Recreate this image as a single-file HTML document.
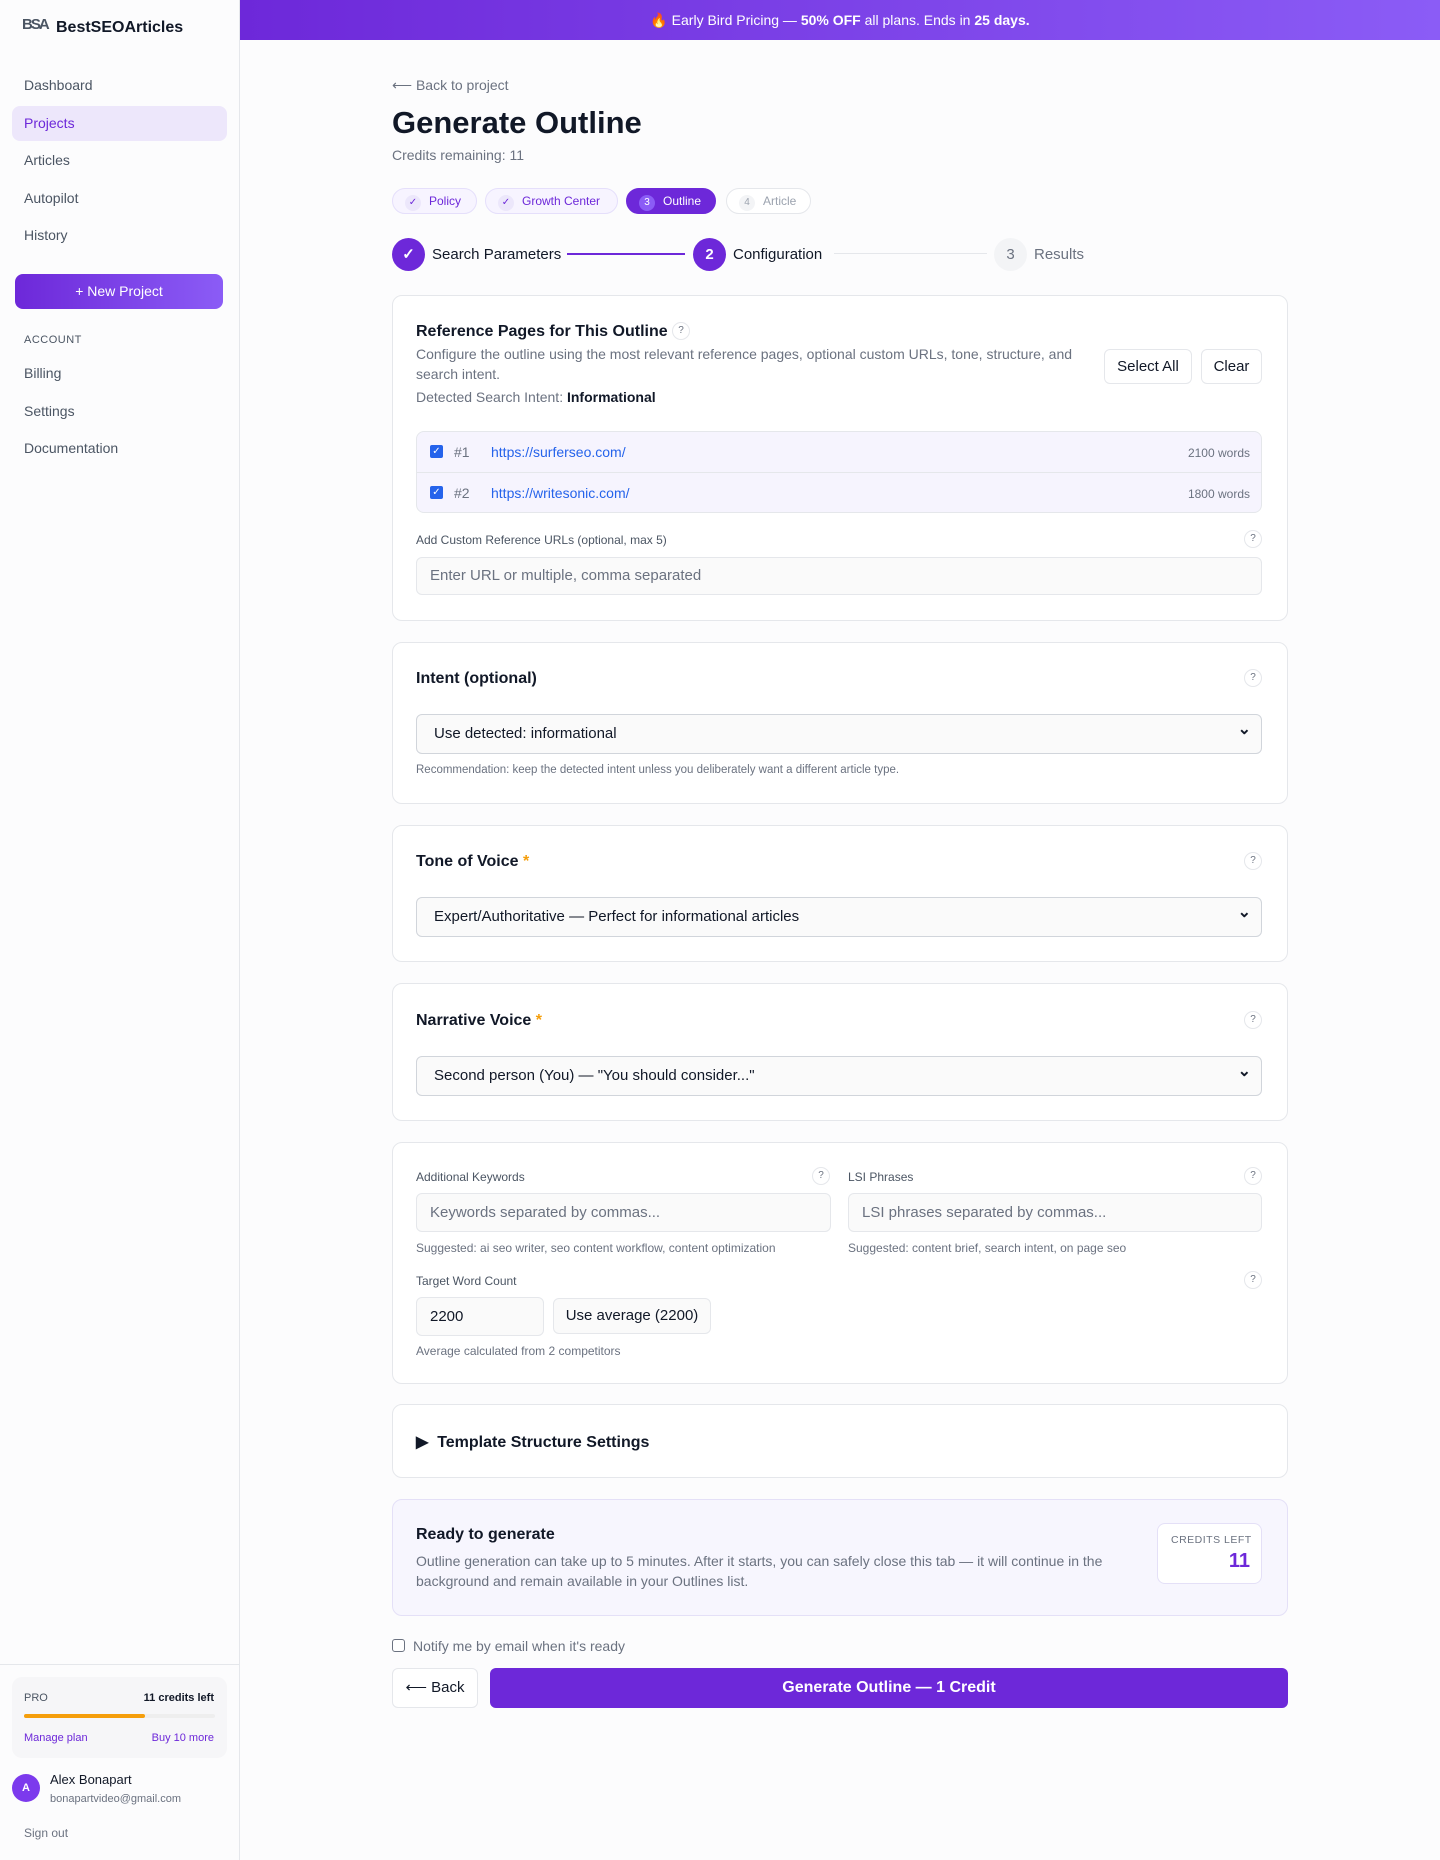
<!DOCTYPE html>
<html><head><meta charset="utf-8"><style>
*{box-sizing:border-box;margin:0;padding:0}
body{width:1440px;height:1860px;background:#fcfcfd;font-family:"Liberation Sans",sans-serif;color:#111827;position:relative;overflow:hidden}
.a{position:absolute}
.side{left:0;top:0;width:240px;height:1860px;background:#fcfcfd;border-right:1px solid #e5e7eb}
.nav{left:24px;font-size:14px;color:#4b5563}
.banner{left:240px;top:0;width:1200px;height:40px;background:linear-gradient(90deg,#6d28d9,#8b5cf6);color:#fff;font-size:14px;text-align:center;line-height:40px}
.card{left:392px;width:896px;background:#fff;border:1px solid #e5e7eb;border-radius:10px}
.h{font-size:16px;font-weight:bold;color:#111827}
.q{width:18px;height:18px;border:1px solid #e5e7eb;border-radius:50%;font-size:10px;color:#6b7280;text-align:center;line-height:16px;background:#fff}
.sel{left:416px;width:846px;height:40px;border:1px solid #d1d5db;border-radius:6px;background:#fafafa;font-size:15px;line-height:38px;padding-left:17px;color:#111827}
.sel:after{content:"⌄";position:absolute;right:10px;top:-4px;font-size:16px;font-weight:bold}
.inp{border:1px solid #e5e7eb;border-radius:6px;background:#fafafa;font-size:15px;padding-left:13px;color:#6b7280}
.lbl{font-size:12px;color:#4b5563}
.sm{font-size:12px;color:#6b7280}
.chip{top:188px;height:26px;border-radius:13px;font-size:12px;line-height:24px;border:1px solid #e5dffb;background:#f7f4ff;color:#6d28d9;padding-left:12px}
.chip i{font-style:normal;display:inline-block;width:16px;height:16px;border-radius:50%;background:#ece7fb;text-align:center;line-height:16px;font-size:10px;margin-right:8px}
.circ{top:238px;width:33px;height:33px;border-radius:50%;text-align:center;line-height:33px;font-size:15px;font-weight:bold}
.btn{border:1px solid #e5e7eb;border-radius:6px;background:#fff;font-size:15px;text-align:center}
</style></head><body>
<div class="a side">
 <div class="a" style="left:22px;top:16px;width:24px;height:24px;font-size:15px;font-weight:bold;color:#4b5563;letter-spacing:-2px">BSA</div>
 <div class="a" style="left:56px;top:19px;font-size:16px;font-weight:bold;color:#111827">BestSEOArticles</div>
 <div class="a nav" style="top:77px">Dashboard</div>
 <div class="a" style="left:12px;top:106px;width:215px;height:35px;border-radius:8px;background:#ede7fb"></div>
 <div class="a nav" style="top:115px;color:#6d28d9">Projects</div>
 <div class="a nav" style="top:152px">Articles</div>
 <div class="a nav" style="top:190px">Autopilot</div>
 <div class="a nav" style="top:227px">History</div>
 <div class="a" style="left:15px;top:274px;width:208px;height:35px;border-radius:8px;background:linear-gradient(90deg,#6d28d9,#8b5cf6);color:#fff;font-size:14px;text-align:center;line-height:35px">+ New Project</div>
 <div class="a" style="left:24px;top:334px;font-size:11px;color:#4b5563;letter-spacing:.5px">ACCOUNT</div>
 <div class="a nav" style="top:365px">Billing</div>
 <div class="a nav" style="top:403px">Settings</div>
 <div class="a nav" style="top:440px">Documentation</div>
 <div class="a" style="left:0;top:1664px;width:240px;border-top:1px solid #e5e7eb"></div>
 <div class="a" style="left:12px;top:1677px;width:215px;height:81px;border-radius:10px;background:#f6f6f8"></div>
 <div class="a" style="left:24px;top:1692px;font-size:11px;color:#4b5563">PRO</div>
 <div class="a" style="right:25px;top:1692px;font-size:11px;font-weight:bold;color:#111827">11 credits left</div>
 <div class="a" style="left:24px;top:1714px;width:191px;height:4px;background:#eee;border-radius:2px"><div style="width:121px;height:4px;background:#f59e0b;border-radius:2px"></div></div>
 <div class="a" style="left:24px;top:1732px;font-size:11px;color:#6d28d9">Manage plan</div>
 <div class="a" style="right:25px;top:1732px;font-size:11px;color:#6d28d9">Buy 10 more</div>
 <div class="a" style="left:12px;top:1774px;width:28px;height:28px;border-radius:50%;background:#7c3aed;color:#fff;font-size:11px;font-weight:bold;text-align:center;line-height:28px">A</div>
 <div class="a" style="left:50px;top:1772px;font-size:13px;color:#111827">Alex Bonapart</div>
 <div class="a" style="left:50px;top:1793px;font-size:11px;color:#6b7280">bonapartvideo@gmail.com</div>
 <div class="a" style="left:24px;top:1826px;font-size:12px;color:#6b7280">Sign out</div>
</div>
<div class="a banner">🔥 Early Bird Pricing — <b>50% OFF</b> all plans. Ends in <b>25 days.</b></div>

<div class="a" style="left:392px;top:77px;font-size:14px;color:#6b7280">⟵ Back to project</div>
<div class="a" style="left:392px;top:105px;font-size:31px;font-weight:bold;color:#111827">Generate Outline</div>
<div class="a" style="left:392px;top:147px;font-size:14px;color:#6b7280">Credits remaining: 11</div>

<div class="a chip" style="left:392px;width:85px"><i>✓</i>Policy</div>
<div class="a chip" style="left:485px;width:133px"><i>✓</i>Growth Center</div>
<div class="a chip" style="left:626px;width:90px;background:#6d28d9;color:#fff;border-color:#6d28d9"><i style="background:#8b5cf6">3</i>Outline</div>
<div class="a chip" style="left:726px;width:85px;background:#fff;color:#9ca3af;border-color:#e5e7eb"><i style="background:#f3f4f6">4</i>Article</div>

<div class="a circ" style="left:392px;background:#6d28d9;color:#fff">✓</div>
<div class="a" style="left:432px;top:246px;font-size:15px">Search Parameters</div>
<div class="a" style="left:567px;top:253px;width:118px;height:2px;background:#6d28d9"></div>
<div class="a circ" style="left:693px;background:#6d28d9;color:#fff">2</div>
<div class="a" style="left:733px;top:246px;font-size:15px">Configuration</div>
<div class="a" style="left:834px;top:253px;width:153px;height:1px;background:#e5e7eb"></div>
<div class="a circ" style="left:994px;background:#f3f4f6;color:#6b7280;font-weight:normal">3</div>
<div class="a" style="left:1034px;top:246px;font-size:15px;color:#6b7280">Results</div>

<div class="a card" style="top:295px;height:326px"></div>
<div class="a h" style="left:416px;top:323px">Reference Pages for This Outline</div>
<div class="a q" style="left:672px;top:322px">?</div>
<div class="a" style="left:416px;top:344px;font-size:14px;color:#6b7280;width:660px;line-height:20px">Configure the outline using the most relevant reference pages, optional custom URLs, tone, structure, and search intent.</div>
<div class="a" style="left:416px;top:389px;font-size:14px;color:#6b7280">Detected Search Intent: <b style="color:#111827">Informational</b></div>
<div class="a btn" style="left:1104px;top:349px;width:88px;height:35px;line-height:33px">Select All</div>
<div class="a btn" style="left:1201px;top:349px;width:61px;height:35px;line-height:33px">Clear</div>
<div class="a" style="left:416px;top:431px;width:846px;height:82px;border:1px solid #e5e7eb;border-radius:8px;background:#f6f4fe"></div>
<div class="a" style="left:417px;top:472px;width:844px;border-top:1px solid #e5e7eb"></div>
<div class="a" style="left:430px;top:445px;width:13px;height:13px;background:#2563eb;border-radius:2px;color:#fff;font-size:10px;line-height:13px;text-align:center">✓</div>
<div class="a" style="left:454px;top:444px;font-size:14px;color:#6b7280">#1</div>
<div class="a" style="left:491px;top:444px;font-size:14px;color:#2563eb">https://surferseo.com/</div>
<div class="a sm" style="right:190px;top:446px">2100 words</div>
<div class="a" style="left:430px;top:486px;width:13px;height:13px;background:#2563eb;border-radius:2px;color:#fff;font-size:10px;line-height:13px;text-align:center">✓</div>
<div class="a" style="left:454px;top:485px;font-size:14px;color:#6b7280">#2</div>
<div class="a" style="left:491px;top:485px;font-size:14px;color:#2563eb">https://writesonic.com/</div>
<div class="a sm" style="right:190px;top:487px">1800 words</div>
<div class="a lbl" style="left:416px;top:533px">Add Custom Reference URLs (optional, max 5)</div>
<div class="a q" style="left:1244px;top:530px">?</div>
<div class="a inp" style="left:416px;top:557px;width:846px;height:38px;line-height:36px">Enter URL or multiple, comma separated</div>

<div class="a card" style="top:642px;height:162px"></div>
<div class="a h" style="left:416px;top:670px">Intent (optional)</div>
<div class="a q" style="left:1244px;top:669px">?</div>
<div class="a sel" style="top:714px">Use detected: informational</div>
<div class="a sm" style="left:416px;top:764px;font-size:11.5px">Recommendation: keep the detected intent unless you deliberately want a different article type.</div>

<div class="a card" style="top:825px;height:137px"></div>
<div class="a h" style="left:416px;top:853px">Tone of Voice <span style="color:#f59e0b">*</span></div>
<div class="a q" style="left:1244px;top:852px">?</div>
<div class="a sel" style="top:897px">Expert/Authoritative — Perfect for informational articles</div>

<div class="a card" style="top:983px;height:138px"></div>
<div class="a h" style="left:416px;top:1012px">Narrative Voice <span style="color:#f59e0b">*</span></div>
<div class="a q" style="left:1244px;top:1011px">?</div>
<div class="a sel" style="top:1056px">Second person (You) — "You should consider..."</div>

<div class="a card" style="top:1142px;height:242px"></div>
<div class="a lbl" style="left:416px;top:1170px">Additional Keywords</div>
<div class="a q" style="left:812px;top:1167px">?</div>
<div class="a lbl" style="left:848px;top:1170px">LSI Phrases</div>
<div class="a q" style="left:1244px;top:1167px">?</div>
<div class="a inp" style="left:416px;top:1193px;width:415px;height:39px;line-height:37px">Keywords separated by commas...</div>
<div class="a inp" style="left:848px;top:1193px;width:414px;height:39px;line-height:37px">LSI phrases separated by commas...</div>
<div class="a sm" style="left:416px;top:1241px">Suggested: ai seo writer, seo content workflow, content optimization</div>
<div class="a sm" style="left:848px;top:1241px">Suggested: content brief, search intent, on page seo</div>
<div class="a lbl" style="left:416px;top:1274px">Target Word Count</div>
<div class="a q" style="left:1244px;top:1271px">?</div>
<div class="a inp" style="left:416px;top:1297px;width:128px;height:39px;line-height:37px;color:#111827">2200</div>
<div class="a btn" style="left:553px;top:1298px;width:158px;height:36px;line-height:34px;background:#fafafa">Use average (2200)</div>
<div class="a sm" style="left:416px;top:1344px">Average calculated from 2 competitors</div>

<div class="a card" style="top:1404px;height:74px"></div>
<div class="a h" style="left:416px;top:1432px">▶&nbsp; Template Structure Settings</div>

<div class="a card" style="top:1499px;height:117px;background:#f7f6fe;border-color:#e4e0f7"></div>
<div class="a h" style="left:416px;top:1526px">Ready to generate</div>
<div class="a" style="left:416px;top:1551px;font-size:14px;color:#6b7280;line-height:20px;width:715px">Outline generation can take up to 5 minutes. After it starts, you can safely close this tab — it will continue in the background and remain available in your Outlines list.</div>
<div class="a" style="left:1157px;top:1523px;width:105px;height:61px;background:#fff;border:1px solid #e4e0f7;border-radius:8px"></div>
<div class="a" style="left:1171px;top:1534px;font-size:10.5px;color:#6b7280;letter-spacing:.5px">CREDITS LEFT</div>
<div class="a" style="right:190px;top:1550px;font-size:20px;font-weight:bold;color:#6d28d9">11</div>

<div class="a" style="left:392px;top:1639px;width:13px;height:13px;border:1px solid #6b7280;border-radius:3px;background:#fff"></div>
<div class="a" style="left:413px;top:1638px;font-size:14px;color:#6b7280">Notify me by email when it's ready</div>
<div class="a btn" style="left:392px;top:1668px;width:86px;height:40px;line-height:38px">⟵ Back</div>
<div class="a" style="left:490px;top:1668px;width:798px;height:40px;border-radius:6px;background:#6d28d9;color:#fff;font-size:16px;font-weight:bold;text-align:center;line-height:40px">Generate Outline — 1 Credit</div>
</body></html>
